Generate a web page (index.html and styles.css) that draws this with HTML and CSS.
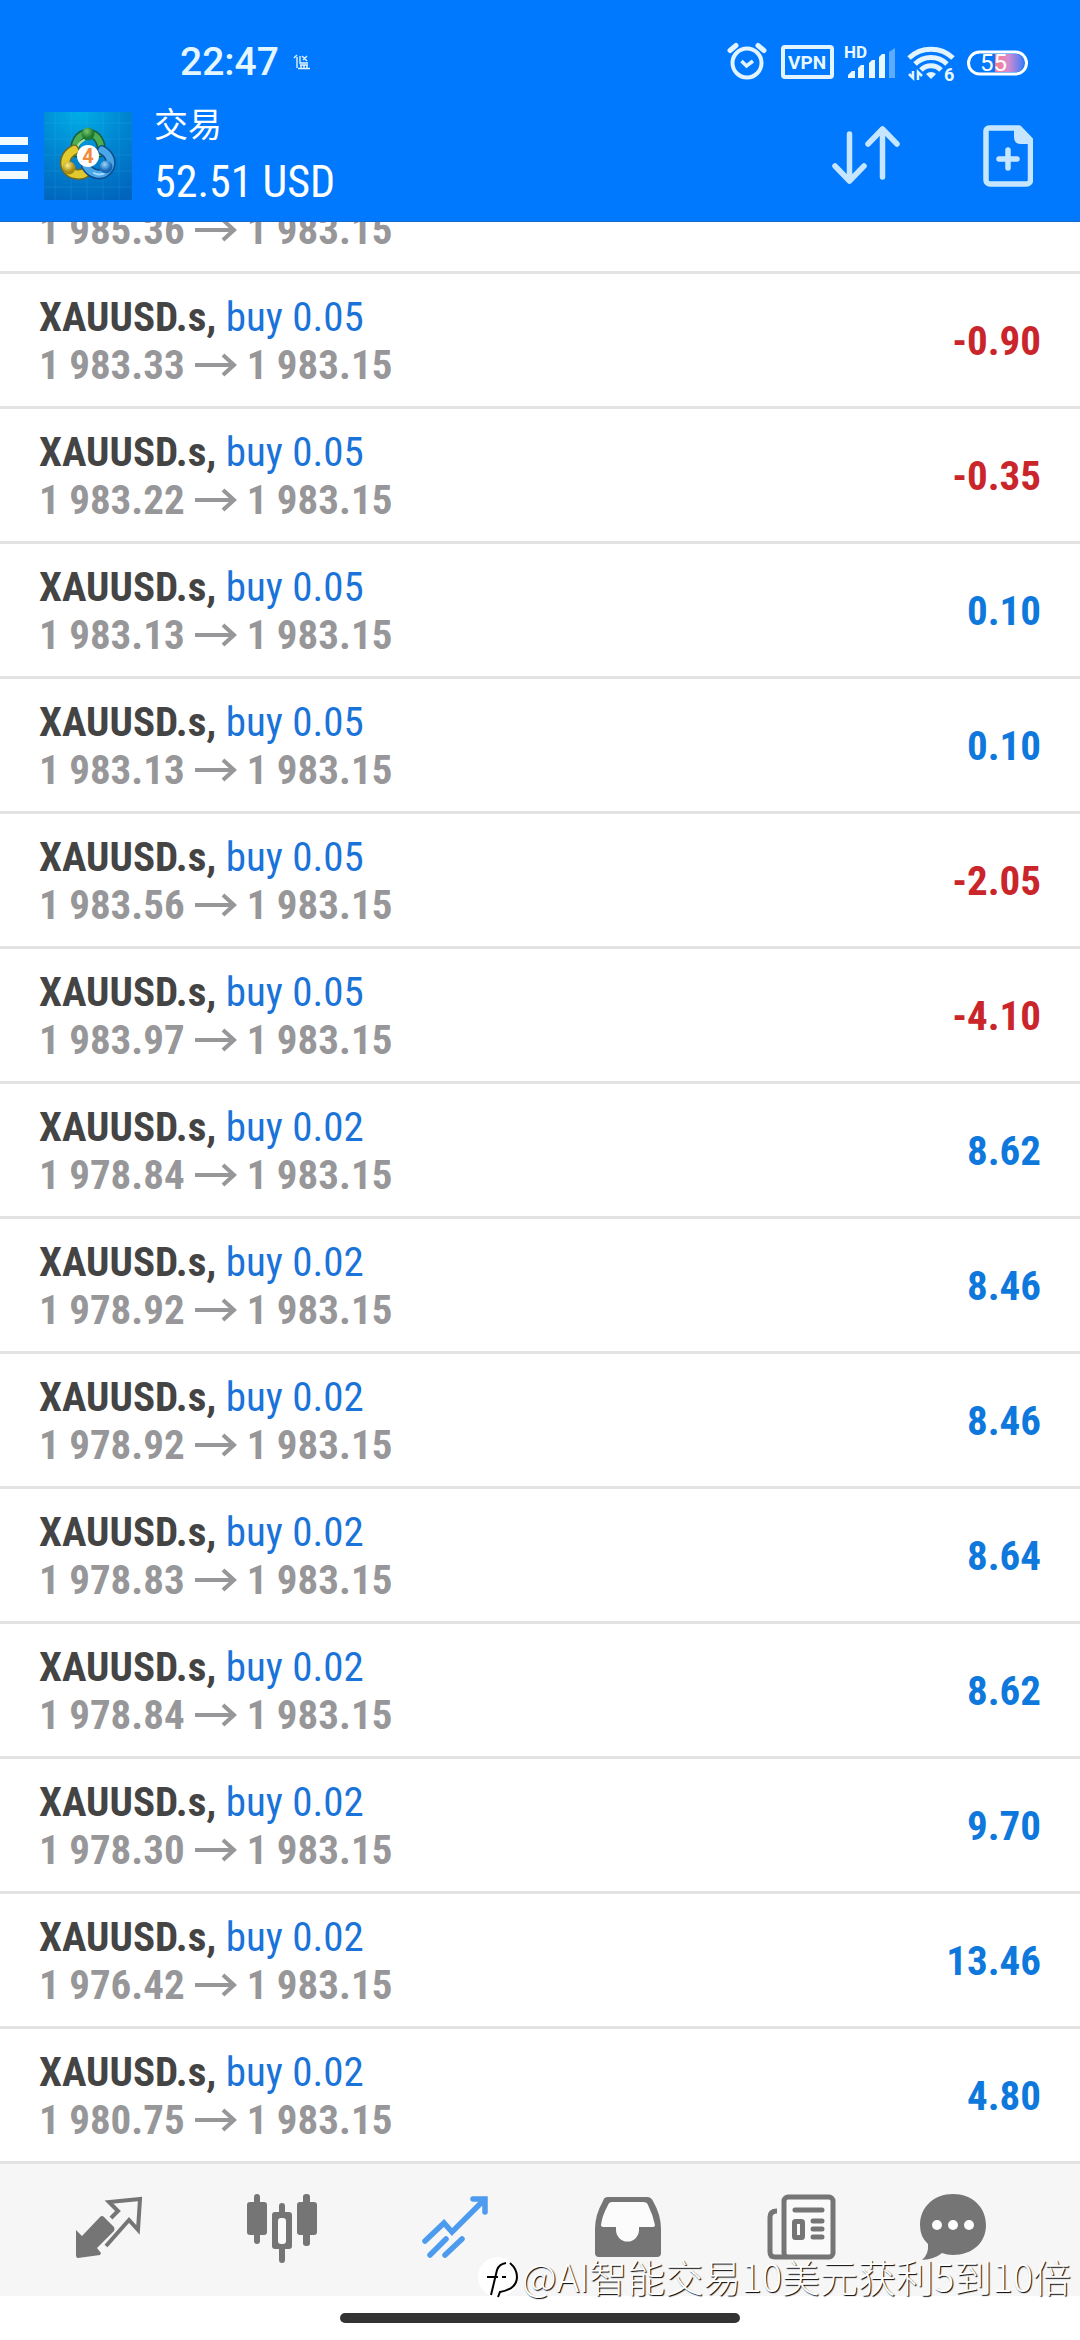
FILE: index.html
```html
<!DOCTYPE html>
<html lang="zh-CN">
<head>
<meta charset="utf-8">
<meta name="viewport" content="width=device-width, initial-scale=1">
<title>交易</title>
<link rel="stylesheet" href="styles.css">
</head>
<body>
<div class="app">
  <header class="header">
    <div class="status">
      <span class="clock">22:47</span>
      <svg class="tray" width="18" height="16" viewBox="0 0 18 16" fill="none" stroke="#e4f4ff" stroke-width="1.4"><path d="M4 1 1 4M4 3v11M7 2v7h8M9 2l5 5M14 2l-4 4M5 14.500h12M7 11h8M8 11v3M11 11v3M14 11v3"/></svg>
      <svg class="sys" width="302" height="40" viewBox="0 2 302 40" fill="none" stroke="#e1f4ff">
        <circle cx="20" cy="23" r="14.500" stroke-width="4"/>
        <path d="m14.500 21 5 5 6.500-5" stroke-width="3.500"/>
        <path d="m3 10.500 6-5M37 10.500l-6-5" stroke-width="5" stroke-linecap="round"/>
        <rect x="56" y="7" width="49" height="30" rx="2" stroke-width="4"/>
        <text class="t-vpn" x="61" y="29">VPN</text>
        <text class="t-hd" x="117" y="18">HD</text>
        <g stroke="none" fill="#e9f8ff">
          <path d="M121 38v-3l4-4h3v7zM131 38V28l3-3h3v13zM142 38V23l3-3h3v18zM152 38V17l3-3h3v24z"/>
          <path d="M162 38V12l6-4v30z" opacity=".4"/>
        </g>
        <g stroke-width="5">
          <path d="M182 18a32 32 0 0 1 44 0"/>
          <path d="M188 24a23 23 0 0 1 32 0"/>
          <path d="M194 30a14 14 0 0 1 20 0"/>
        </g>
        <path d="M204 39l-5-5a7 7 0 0 1 10 0z" fill="#e1f4ff" stroke="none"/>
        <path d="m182 34 4 4V31M195 36l-4-4v8" stroke-width="2.500"/>
        <text class="t-six" x="217" y="41">6</text>
        <defs><linearGradient id="charge"><stop offset="0" stop-color="#ff7a86"/><stop offset=".45" stop-color="#d78bd0"/><stop offset="1" stop-color="#3f7cf5"/></linearGradient></defs>
        <path d="M268 14h22a9 9 0 0 1 7 9 9 9 0 0 1-7 9h-22z" fill="url(#charge)" stroke="none"/>
        <rect x="241.500" y="12" width="58" height="22" rx="11" stroke-width="3" stroke="#fff"/>
        <text class="t-bat" x="253" y="31">55</text>
      </svg>
    </div>
    <div class="bar">
      <button class="menu" aria-label="菜单">
        <svg width="28" height="42" viewBox="0 0 28 42" fill="#f0faff"><path d="M0 0h28v8H0zM0 17h28v8H0zM0 34h28v8H0z"/></svg>
      </button>
      <svg class="logo" width="88" height="88" viewBox="0 0 88 88">
        <defs>
          <radialGradient id="sky" cx=".4" cy="0" r="1.100"><stop offset="0" stop-color="#00aee6"/><stop offset=".5" stop-color="#0084d0"/><stop offset="1" stop-color="#0063bd"/></radialGradient>
          <radialGradient id="gr" cx=".4" cy=".3"><stop offset="0" stop-color="#7cc86a"/><stop offset="1" stop-color="#1e7a32"/></radialGradient>
          <radialGradient id="ye" cx=".4" cy=".3"><stop offset="0" stop-color="#fff08a"/><stop offset="1" stop-color="#a88a12"/></radialGradient>
          <radialGradient id="bl" cx=".4" cy=".3"><stop offset="0" stop-color="#9ad8ff"/><stop offset="1" stop-color="#1668b4"/></radialGradient>
        </defs>
        <rect width="88" height="88" fill="url(#sky)"/>
        <path d="M11 0v88M27 0v88M43 0v88M59 0v88M75 0v88M0 11h88M0 27h88M0 43h88M0 59h88M0 75h88" stroke="#5cc4f0" stroke-opacity=".14"/>
        <g fill="none" stroke-linecap="round">
          <path d="M32 41a13 14 0 1 1 24 0" stroke="#1d5b38" stroke-width="9"/>
          <path d="M32 41a13 14 0 1 1 24 0" stroke="#4cae52" stroke-width="6"/>
          <path d="M33 37a12 13 0 0 1 7-9" stroke="#b4e3a0" stroke-width="2"/>
          <path d="M30 38c-9 5-11 14-6 20 5 6 14 5 18 2" stroke="#6b6a20" stroke-width="11"/>
          <path d="M30 38c-9 5-11 14-6 20 5 6 14 5 18 2" stroke="#e2c92e" stroke-width="8"/>
          <path d="M58 38c9 5 11 14 6 20-6 7-17 5-22-4" stroke="#0d4c8c" stroke-width="10"/>
          <path d="M58 38c9 5 11 14 6 20-6 7-17 5-22-4" stroke="#4aa6e6" stroke-width="7"/>
          <path d="M50 61c5 3 12 1 15-4" stroke="#a6dcff" stroke-width="2"/>
        </g>
        <circle cx="44" cy="22" r="6.500" fill="url(#gr)"/>
        <circle cx="25" cy="56" r="6.500" fill="url(#ye)"/>
        <circle cx="62" cy="55" r="6.500" fill="url(#bl)"/>
        <circle cx="44" cy="44" r="11" fill="#fff"/>
        <text class="t-four" x="44" y="51" text-anchor="middle">4</text>
      </svg>
      <div class="titles">
        <h1 class="title">交易</h1>
        <div class="balance">52.51 USD</div>
      </div>
      <button class="tool" aria-label="排序">
        <svg width="68" height="62" viewBox="0 0 68 62" fill="none" stroke="#c6e6ff" stroke-width="5.500" stroke-linecap="round" stroke-linejoin="round"><path d="M17.500 9v47M3 41l14.500 15L32 41M50.500 52V4M36 19 50.500 4 65 19"/></svg>
      </button>
      <button class="tool" aria-label="新订单">
        <svg width="50" height="62" viewBox="0 0 50 62" fill="none" stroke="#c6e6ff"><path d="M6 3h30l11.500 12v40a4 4 0 0 1-4 4H7a4 4 0 0 1-4-4V6a3 3 0 0 1 3-3z" stroke-width="5.500" stroke-linejoin="round"/><path d="M31 3v9q0 7 7 7h11V14L37 2z" fill="#c6e6ff" stroke="none"/><path d="M25 25v18M16 34h18" stroke-width="5.500" stroke-linecap="round"/></svg>
      </button>
    </div>
  </header>

  <svg class="defs" width="0" height="0" aria-hidden="true"><symbol id="arrow" viewBox="0 0 42 24"><path d="M0 12h39M28 2l11 10-11 10" fill="none" stroke="currentColor" stroke-width="4"/></symbol></svg>

  <main class="list-wrap">
  <ul class="list">
    <li class="row"><div><p class="price">1 985.36<svg><use href="#arrow"/></svg>1 983.15</p></div></li>
    <li class="row"><div><p class="sym">XAUUSD.s, <span>buy 0.05</span></p><p class="price">1 983.33<svg><use href="#arrow"/></svg>1 983.15</p></div><b class="down">-0.90</b></li>
    <li class="row"><div><p class="sym">XAUUSD.s, <span>buy 0.05</span></p><p class="price">1 983.22<svg><use href="#arrow"/></svg>1 983.15</p></div><b class="down">-0.35</b></li>
    <li class="row"><div><p class="sym">XAUUSD.s, <span>buy 0.05</span></p><p class="price">1 983.13<svg><use href="#arrow"/></svg>1 983.15</p></div><b class="up">0.10</b></li>
    <li class="row"><div><p class="sym">XAUUSD.s, <span>buy 0.05</span></p><p class="price">1 983.13<svg><use href="#arrow"/></svg>1 983.15</p></div><b class="up">0.10</b></li>
    <li class="row"><div><p class="sym">XAUUSD.s, <span>buy 0.05</span></p><p class="price">1 983.56<svg><use href="#arrow"/></svg>1 983.15</p></div><b class="down">-2.05</b></li>
    <li class="row"><div><p class="sym">XAUUSD.s, <span>buy 0.05</span></p><p class="price">1 983.97<svg><use href="#arrow"/></svg>1 983.15</p></div><b class="down">-4.10</b></li>
    <li class="row"><div><p class="sym">XAUUSD.s, <span>buy 0.02</span></p><p class="price">1 978.84<svg><use href="#arrow"/></svg>1 983.15</p></div><b class="up">8.62</b></li>
    <li class="row"><div><p class="sym">XAUUSD.s, <span>buy 0.02</span></p><p class="price">1 978.92<svg><use href="#arrow"/></svg>1 983.15</p></div><b class="up">8.46</b></li>
    <li class="row"><div><p class="sym">XAUUSD.s, <span>buy 0.02</span></p><p class="price">1 978.92<svg><use href="#arrow"/></svg>1 983.15</p></div><b class="up">8.46</b></li>
    <li class="row"><div><p class="sym">XAUUSD.s, <span>buy 0.02</span></p><p class="price">1 978.83<svg><use href="#arrow"/></svg>1 983.15</p></div><b class="up">8.64</b></li>
    <li class="row"><div><p class="sym">XAUUSD.s, <span>buy 0.02</span></p><p class="price">1 978.84<svg><use href="#arrow"/></svg>1 983.15</p></div><b class="up">8.62</b></li>
    <li class="row"><div><p class="sym">XAUUSD.s, <span>buy 0.02</span></p><p class="price">1 978.30<svg><use href="#arrow"/></svg>1 983.15</p></div><b class="up">9.70</b></li>
    <li class="row"><div><p class="sym">XAUUSD.s, <span>buy 0.02</span></p><p class="price">1 976.42<svg><use href="#arrow"/></svg>1 983.15</p></div><b class="up">13.46</b></li>
    <li class="row"><div><p class="sym">XAUUSD.s, <span>buy 0.02</span></p><p class="price">1 980.75<svg><use href="#arrow"/></svg>1 983.15</p></div><b class="up">4.80</b></li>
  </ul>
  </main>

  <footer class="footer">
    <nav class="nav">
      <button aria-label="行情"><svg width="72" height="72" viewBox="0 0 72 72"><path d="M3 36l6 6L27 23q2-2 4 0l10 10q1 2 0 4L24 54l4 5-1 2-22 3q-2 0-2-3z" fill="currentColor"/><path d="M38 24l7-7-9-9 31-3-2 31-9-10L33 52" fill="none" stroke="currentColor" stroke-width="4"/></svg></button>
      <button aria-label="图表"><svg width="72" height="72" viewBox="0 0 72 72" fill="currentColor"><rect x="1" y="8" width="20" height="33" rx="3"/><rect x="8" y="0" width="6" height="50" rx="3"/><rect x="51" y="8" width="20" height="33" rx="3"/><rect x="57" y="0" width="7" height="52" rx="3"/><path d="M33 12a3 3 0 0 1 6 0v6h4a3 3 0 0 1 3 3v31a3 3 0 0 1-3 3h-4v11a3 3 0 0 1-6 0V55h-4a3 3 0 0 1-3-3V21a3 3 0 0 1 3-3h4z"/><rect x="32" y="24" width="8" height="26" rx="3" fill="#f9f9f9"/></svg></button>
      <button class="on" aria-label="交易"><svg width="72" height="72" viewBox="0 0 72 72" fill="none" stroke="currentColor" stroke-width="5.500" stroke-linecap="round"><path d="M6 47l19-18 8 9L65 6M54 5h12v13M11 61l16-16M26 61l17-16"/></svg></button>
      <button aria-label="历史"><svg width="72" height="72" viewBox="0 0 72 72"><path d="M16 3h39q4 0 6 4 8 14 8 28v24q0 4-4 4H7q-4 0-4-4V35Q3 21 11 7q1-4 5-4z" fill="currentColor"/><path d="M20 8q-3 0-4 3-6 11-7 20 0 2 2 2h13v3a11 11 0 0 0 23 0v-3h14q2 0 2-2-2-10-7-20-1-3-5-3z" fill="#fcfcfc"/></svg></button>
      <button aria-label="新闻"><svg width="72" height="72" viewBox="0 0 72 72" fill="none" stroke="currentColor" stroke-width="5"><rect x="19" y="3" width="49" height="60" rx="4" fill="#fafafa"/><path d="M12 17q-7 0-7 6v35q0 5 5 5h12"/><path d="M30 16h27M48 27h9M48 35h9M48 43h9" stroke-linecap="round"/><rect x="29.500" y="27.500" width="8" height="16" rx="1"/></svg></button>
      <button aria-label="消息"><svg width="72" height="72" viewBox="0 0 72 72" fill="currentColor"><path d="M36 0c19 0 33 13 33 31S55 61 36 61q-6 0-11-2-7 6-20 7 7-6 6-16Q3 43 3 31C3 13 17 0 36 0z"/><g fill="#fcfcfc"><circle cx="20" cy="31" r="5"/><circle cx="36" cy="31" r="5"/><circle cx="52" cy="31" r="5"/></g></svg></button>
    </nav>
    <div class="gesture"><span></span></div>
    <div class="watermark">
      <svg width="44" height="44" viewBox="0 0 44 44"><circle cx="20" cy="20" r="20" fill="#fff"/><path d="M13 38l6-25q2-6 9-7M9 20h11M32 6q7 6 7 14 0 12-17 15l-2 5M24 20h4" fill="none" stroke="#000" stroke-width="2"/></svg>
      <span>@AI智能交易10美元获利5到10倍</span>
    </div>
  </footer>
</div>
</body>
</html>
```
FILE: styles.css
```css
* { box-sizing: border-box; }
body {
  margin: 0;
  background: #fff;
  color: #444;
  font-family: "Roboto Condensed", "Liberation Sans Narrow", Roboto, "Noto Sans CJK SC", sans-serif;
}
h1, p, ul { margin: 0; padding: 0; font-weight: 400; }
ul { list-style: none; }
svg { display: block; flex: none; }
button { border: 0; padding: 0; background: none; color: inherit; }
.defs { position: absolute; }

.app { display: flex; flex-direction: column; height: 100vh; }

.header { flex: none; background: #0079ff; border-bottom: 1px solid #1768cf; }
.status { display: flex; align-items: center; height: 90px; padding: 34px 51px 0 180px; }
.clock { font: 500 39px/48px Roboto, sans-serif; color: #e4f7ff; }
.tray { margin-left: 14px; }
.sys { margin-left: auto; overflow: visible; }
.t-vpn, .t-hd, .t-six, .t-bat, .t-four { stroke: none; fill: #e9f8ff; font-family: Roboto, sans-serif; font-weight: 700; }
.t-vpn { font-size: 19px; }
.t-hd { font-size: 17px; }
.t-six { font-size: 18px; }
.t-bat { font-size: 24px; font-weight: 400; fill: #fff; }
.t-four { font-size: 20px; fill: #f08a3c; }

.bar { display: flex; align-items: center; height: 131px; padding-right: 47px; }
.menu { padding-top: 4px; }
.logo { margin-left: 16px; }
.titles { flex: 1; margin-left: 22px; color: #fff; }
.title { font: 400 34px/46px "Noto Sans CJK SC", sans-serif; }
.balance { margin-top: 6px; font-size: 44px; line-height: 60px; }
.tool { margin-left: 83px; }

.list-wrap { flex: 1; min-height: 0; overflow: hidden; display: flex; flex-direction: column; justify-content: flex-end; }
.row {
  display: flex;
  align-items: center;
  justify-content: space-between;
  padding: 19px 39px 17px;
  border-bottom: 3px solid #e3e3e3;
  font-size: 41px;
  line-height: 48px;
}
.sym { font-weight: 700; color: #444; }
.sym span { font-weight: 400; color: #1a73d9; }
.price { display: flex; align-items: center; font-weight: 700; color: #97979a; }
.price svg { width: 42px; height: 24px; margin: 0 10px; }
.up { color: #0f78dc; }
.down { color: #c9252b; }

.footer { flex: none; position: relative; }
.nav {
  display: grid;
  grid-template-columns: repeat(5, 173fr) 132fr;
  height: 132px;
  padding: 0 61px 0 22px;
  background: #f6f6f6;
  color: #757575;
}
.nav button { display: flex; justify-content: center; padding-top: 30px; }
.nav .on { color: #4c9bee; }
.gesture { display: flex; justify-content: center; height: 44px; padding-top: 17px; }
.gesture span { width: 37%; height: 10px; border-radius: 5px; background: #333; }
.watermark {
  position: absolute;
  right: 9px;
  bottom: 39px;
  display: flex;
  align-items: center;
  font: 300 38px/48px "Noto Sans CJK SC", sans-serif;
  color: #fff;
  text-shadow: 1px 1px 1px #000;
}
.watermark svg { margin-top: 6px; }
```
